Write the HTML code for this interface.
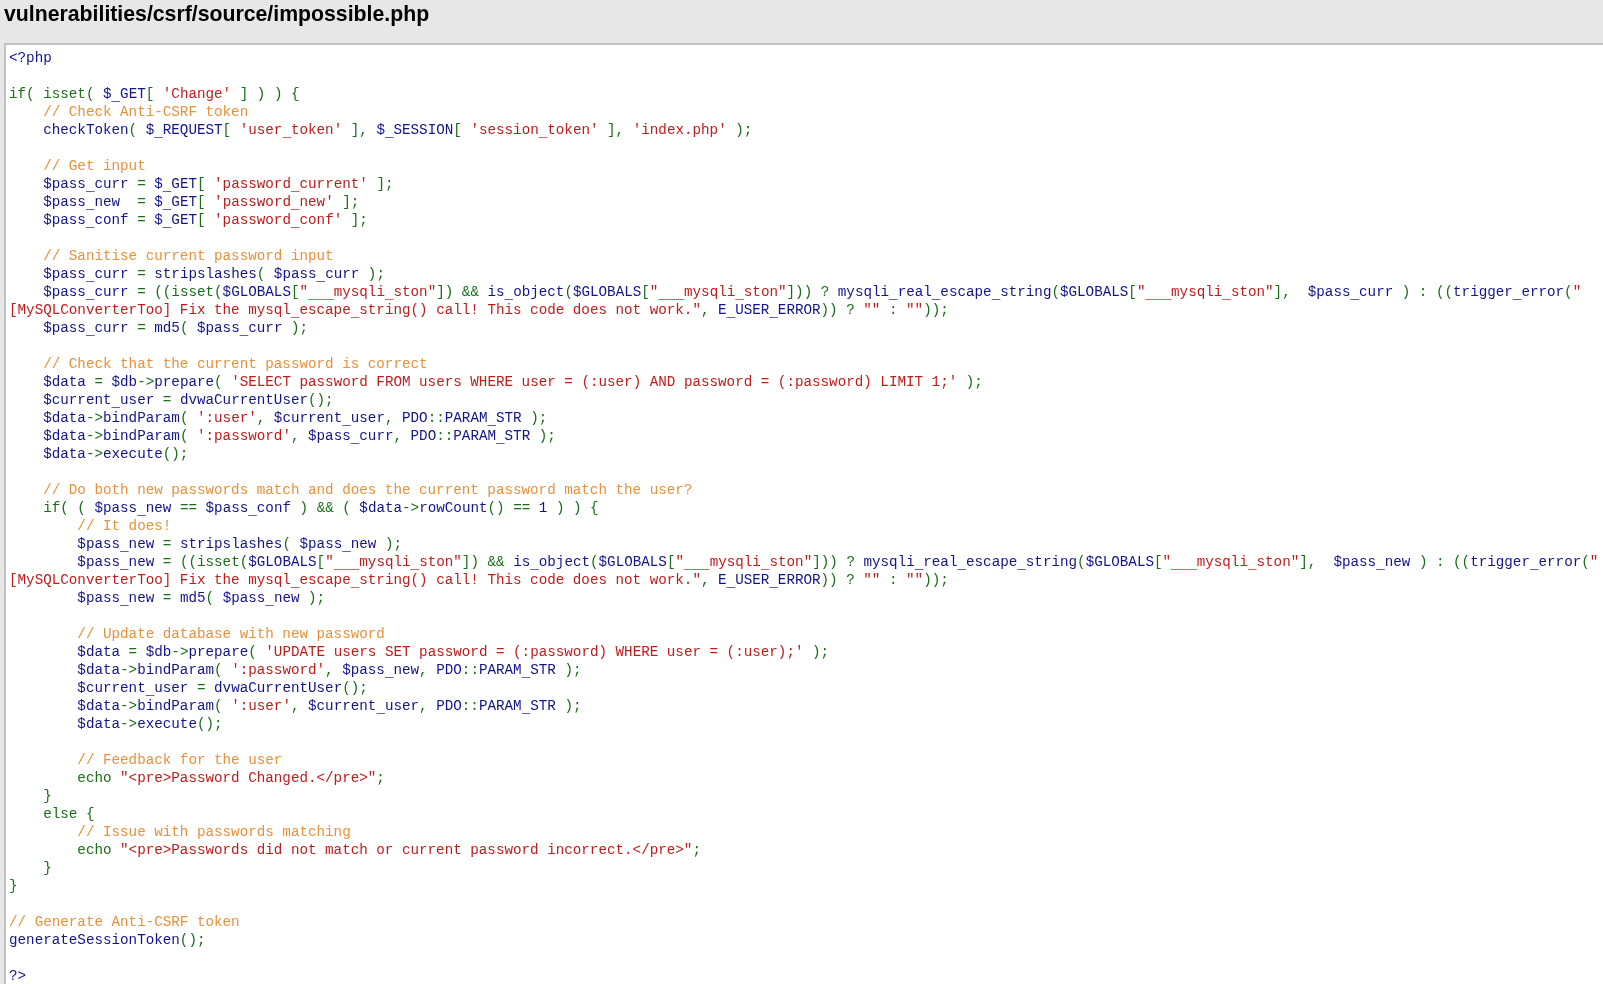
<!DOCTYPE html>
<html>
<head>
<meta charset="utf-8">
<style>
html,body{margin:0;padding:0;}
body{background:#e7e7e7;width:1603px;height:984px;overflow:hidden;position:relative;font-family:"Liberation Sans",sans-serif;}
h1{will-change:transform;position:absolute;left:4px;top:1px;margin:0;font-size:21.25px;font-weight:bold;line-height:26px;color:#000;white-space:nowrap;}
#box{position:absolute;left:4px;top:43px;width:1700px;height:1000px;background:#fff;border-top:2px solid #c0c0c0;border-left:2px solid #c0c0c0;}
pre{will-change:transform;position:absolute;left:3px;top:4px;margin:0;font-family:"Liberation Mono",monospace;font-size:14.24px;line-height:18px;white-space:pre;color:#000;}
.d{color:#14148C}.k{color:#1A6E1A}.s{color:#C01C1C}.c{color:#E8913A}
i{font-style:normal;position:relative;top:2px}
</style>
</head>
<body>
<h1>vulnerabilities/csrf/source/impossible.php</h1>
<div id="box"><pre><span class="d">&lt;?php</span>

<span class="k">if(</span> <span class="k">isset(</span> <span class="d">$<i>_</i>GET</span><span class="k">[</span> <span class="s">'Change'</span> <span class="k">]</span> <span class="k">)</span> <span class="k">)</span> <span class="k">{</span>
    <span class="c">// Check Anti-CSRF token</span>
    <span class="d">checkToken</span><span class="k">(</span> <span class="d">$<i>_</i>REQUEST</span><span class="k">[</span> <span class="s">'user<i>_</i>token'</span> <span class="k">],</span> <span class="d">$<i>_</i>SESSION</span><span class="k">[</span> <span class="s">'session<i>_</i>token'</span> <span class="k">],</span> <span class="s">'index.php'</span> <span class="k">);</span>

    <span class="c">// Get input</span>
    <span class="d">$pass<i>_</i>curr</span> <span class="k">=</span> <span class="d">$<i>_</i>GET</span><span class="k">[</span> <span class="s">'password<i>_</i>current'</span> <span class="k">];</span>
    <span class="d">$pass<i>_</i>new</span>  <span class="k">=</span> <span class="d">$<i>_</i>GET</span><span class="k">[</span> <span class="s">'password<i>_</i>new'</span> <span class="k">];</span>
    <span class="d">$pass<i>_</i>conf</span> <span class="k">=</span> <span class="d">$<i>_</i>GET</span><span class="k">[</span> <span class="s">'password<i>_</i>conf'</span> <span class="k">];</span>

    <span class="c">// Sanitise current password input</span>
    <span class="d">$pass<i>_</i>curr</span> <span class="k">=</span> <span class="d">stripslashes</span><span class="k">(</span> <span class="d">$pass<i>_</i>curr</span> <span class="k">);</span>
    <span class="d">$pass<i>_</i>curr</span> <span class="k">=</span> <span class="k">((isset(</span><span class="d">$GLOBALS</span><span class="k">[</span><span class="s">"<i>_</i><i>_</i><i>_</i>mysqli<i>_</i>ston"</span><span class="k">])</span> <span class="k">&amp;&amp;</span> <span class="d">is<i>_</i>object</span><span class="k">(</span><span class="d">$GLOBALS</span><span class="k">[</span><span class="s">"<i>_</i><i>_</i><i>_</i>mysqli<i>_</i>ston"</span><span class="k">]))</span> <span class="k">?</span> <span class="d">mysqli<i>_</i>real<i>_</i>escape<i>_</i>string</span><span class="k">(</span><span class="d">$GLOBALS</span><span class="k">[</span><span class="s">"<i>_</i><i>_</i><i>_</i>mysqli<i>_</i>ston"</span><span class="k">],</span>  <span class="d">$pass<i>_</i>curr</span> <span class="k">)</span> <span class="k">:</span> <span class="k">((</span><span class="d">trigger<i>_</i>error</span><span class="k">(</span><span class="s">"
[MySQLConverterToo] Fix the mysql<i>_</i>escape<i>_</i>string() call! This code does not work."</span><span class="k">,</span> <span class="d">E<i>_</i>USER<i>_</i>ERROR</span><span class="k">))</span> <span class="k">?</span> <span class="s">""</span> <span class="k">:</span> <span class="s">""</span><span class="k">));</span>
    <span class="d">$pass<i>_</i>curr</span> <span class="k">=</span> <span class="d">md5</span><span class="k">(</span> <span class="d">$pass<i>_</i>curr</span> <span class="k">);</span>

    <span class="c">// Check that the current password is correct</span>
    <span class="d">$data</span> <span class="k">=</span> <span class="d">$db</span><span class="k">-&gt;</span><span class="d">prepare</span><span class="k">(</span> <span class="s">'SELECT password FROM users WHERE user = (:user) AND password = (:password) LIMIT 1;'</span> <span class="k">);</span>
    <span class="d">$current<i>_</i>user</span> <span class="k">=</span> <span class="d">dvwaCurrentUser</span><span class="k">();</span>
    <span class="d">$data</span><span class="k">-&gt;</span><span class="d">bindParam</span><span class="k">(</span> <span class="s">':user'</span><span class="k">,</span> <span class="d">$current<i>_</i>user</span><span class="k">,</span> <span class="d">PDO</span><span class="k">::</span><span class="d">PARAM<i>_</i>STR</span> <span class="k">);</span>
    <span class="d">$data</span><span class="k">-&gt;</span><span class="d">bindParam</span><span class="k">(</span> <span class="s">':password'</span><span class="k">,</span> <span class="d">$pass<i>_</i>curr</span><span class="k">,</span> <span class="d">PDO</span><span class="k">::</span><span class="d">PARAM<i>_</i>STR</span> <span class="k">);</span>
    <span class="d">$data</span><span class="k">-&gt;</span><span class="d">execute</span><span class="k">();</span>

    <span class="c">// Do both new passwords match and does the current password match the user?</span>
    <span class="k">if(</span> <span class="k">(</span> <span class="d">$pass<i>_</i>new</span> <span class="k">==</span> <span class="d">$pass<i>_</i>conf</span> <span class="k">)</span> <span class="k">&amp;&amp;</span> <span class="k">(</span> <span class="d">$data</span><span class="k">-&gt;</span><span class="d">rowCount</span><span class="k">()</span> <span class="k">==</span> <span class="d">1</span> <span class="k">)</span> <span class="k">)</span> <span class="k">{</span>
        <span class="c">// It does!</span>
        <span class="d">$pass<i>_</i>new</span> <span class="k">=</span> <span class="d">stripslashes</span><span class="k">(</span> <span class="d">$pass<i>_</i>new</span> <span class="k">);</span>
        <span class="d">$pass<i>_</i>new</span> <span class="k">=</span> <span class="k">((isset(</span><span class="d">$GLOBALS</span><span class="k">[</span><span class="s">"<i>_</i><i>_</i><i>_</i>mysqli<i>_</i>ston"</span><span class="k">])</span> <span class="k">&amp;&amp;</span> <span class="d">is<i>_</i>object</span><span class="k">(</span><span class="d">$GLOBALS</span><span class="k">[</span><span class="s">"<i>_</i><i>_</i><i>_</i>mysqli<i>_</i>ston"</span><span class="k">]))</span> <span class="k">?</span> <span class="d">mysqli<i>_</i>real<i>_</i>escape<i>_</i>string</span><span class="k">(</span><span class="d">$GLOBALS</span><span class="k">[</span><span class="s">"<i>_</i><i>_</i><i>_</i>mysqli<i>_</i>ston"</span><span class="k">],</span>  <span class="d">$pass<i>_</i>new</span> <span class="k">)</span> <span class="k">:</span> <span class="k">((</span><span class="d">trigger<i>_</i>error</span><span class="k">(</span><span class="s">"
[MySQLConverterToo] Fix the mysql<i>_</i>escape<i>_</i>string() call! This code does not work."</span><span class="k">,</span> <span class="d">E<i>_</i>USER<i>_</i>ERROR</span><span class="k">))</span> <span class="k">?</span> <span class="s">""</span> <span class="k">:</span> <span class="s">""</span><span class="k">));</span>
        <span class="d">$pass<i>_</i>new</span> <span class="k">=</span> <span class="d">md5</span><span class="k">(</span> <span class="d">$pass<i>_</i>new</span> <span class="k">);</span>

        <span class="c">// Update database with new password</span>
        <span class="d">$data</span> <span class="k">=</span> <span class="d">$db</span><span class="k">-&gt;</span><span class="d">prepare</span><span class="k">(</span> <span class="s">'UPDATE users SET password = (:password) WHERE user = (:user);'</span> <span class="k">);</span>
        <span class="d">$data</span><span class="k">-&gt;</span><span class="d">bindParam</span><span class="k">(</span> <span class="s">':password'</span><span class="k">,</span> <span class="d">$pass<i>_</i>new</span><span class="k">,</span> <span class="d">PDO</span><span class="k">::</span><span class="d">PARAM<i>_</i>STR</span> <span class="k">);</span>
        <span class="d">$current<i>_</i>user</span> <span class="k">=</span> <span class="d">dvwaCurrentUser</span><span class="k">();</span>
        <span class="d">$data</span><span class="k">-&gt;</span><span class="d">bindParam</span><span class="k">(</span> <span class="s">':user'</span><span class="k">,</span> <span class="d">$current<i>_</i>user</span><span class="k">,</span> <span class="d">PDO</span><span class="k">::</span><span class="d">PARAM<i>_</i>STR</span> <span class="k">);</span>
        <span class="d">$data</span><span class="k">-&gt;</span><span class="d">execute</span><span class="k">();</span>

        <span class="c">// Feedback for the user</span>
        <span class="k">echo</span> <span class="s">"&lt;pre&gt;Password Changed.&lt;/pre&gt;"</span><span class="k">;</span>
    <span class="k">}</span>
    <span class="k">else</span> <span class="k">{</span>
        <span class="c">// Issue with passwords matching</span>
        <span class="k">echo</span> <span class="s">"&lt;pre&gt;Passwords did not match or current password incorrect.&lt;/pre&gt;"</span><span class="k">;</span>
    <span class="k">}</span>
<span class="k">}</span>

<span class="c">// Generate Anti-CSRF token</span>
<span class="d">generateSessionToken</span><span class="k">();</span>

<span class="d">?&gt;</span></pre></div>
</body>
</html>
